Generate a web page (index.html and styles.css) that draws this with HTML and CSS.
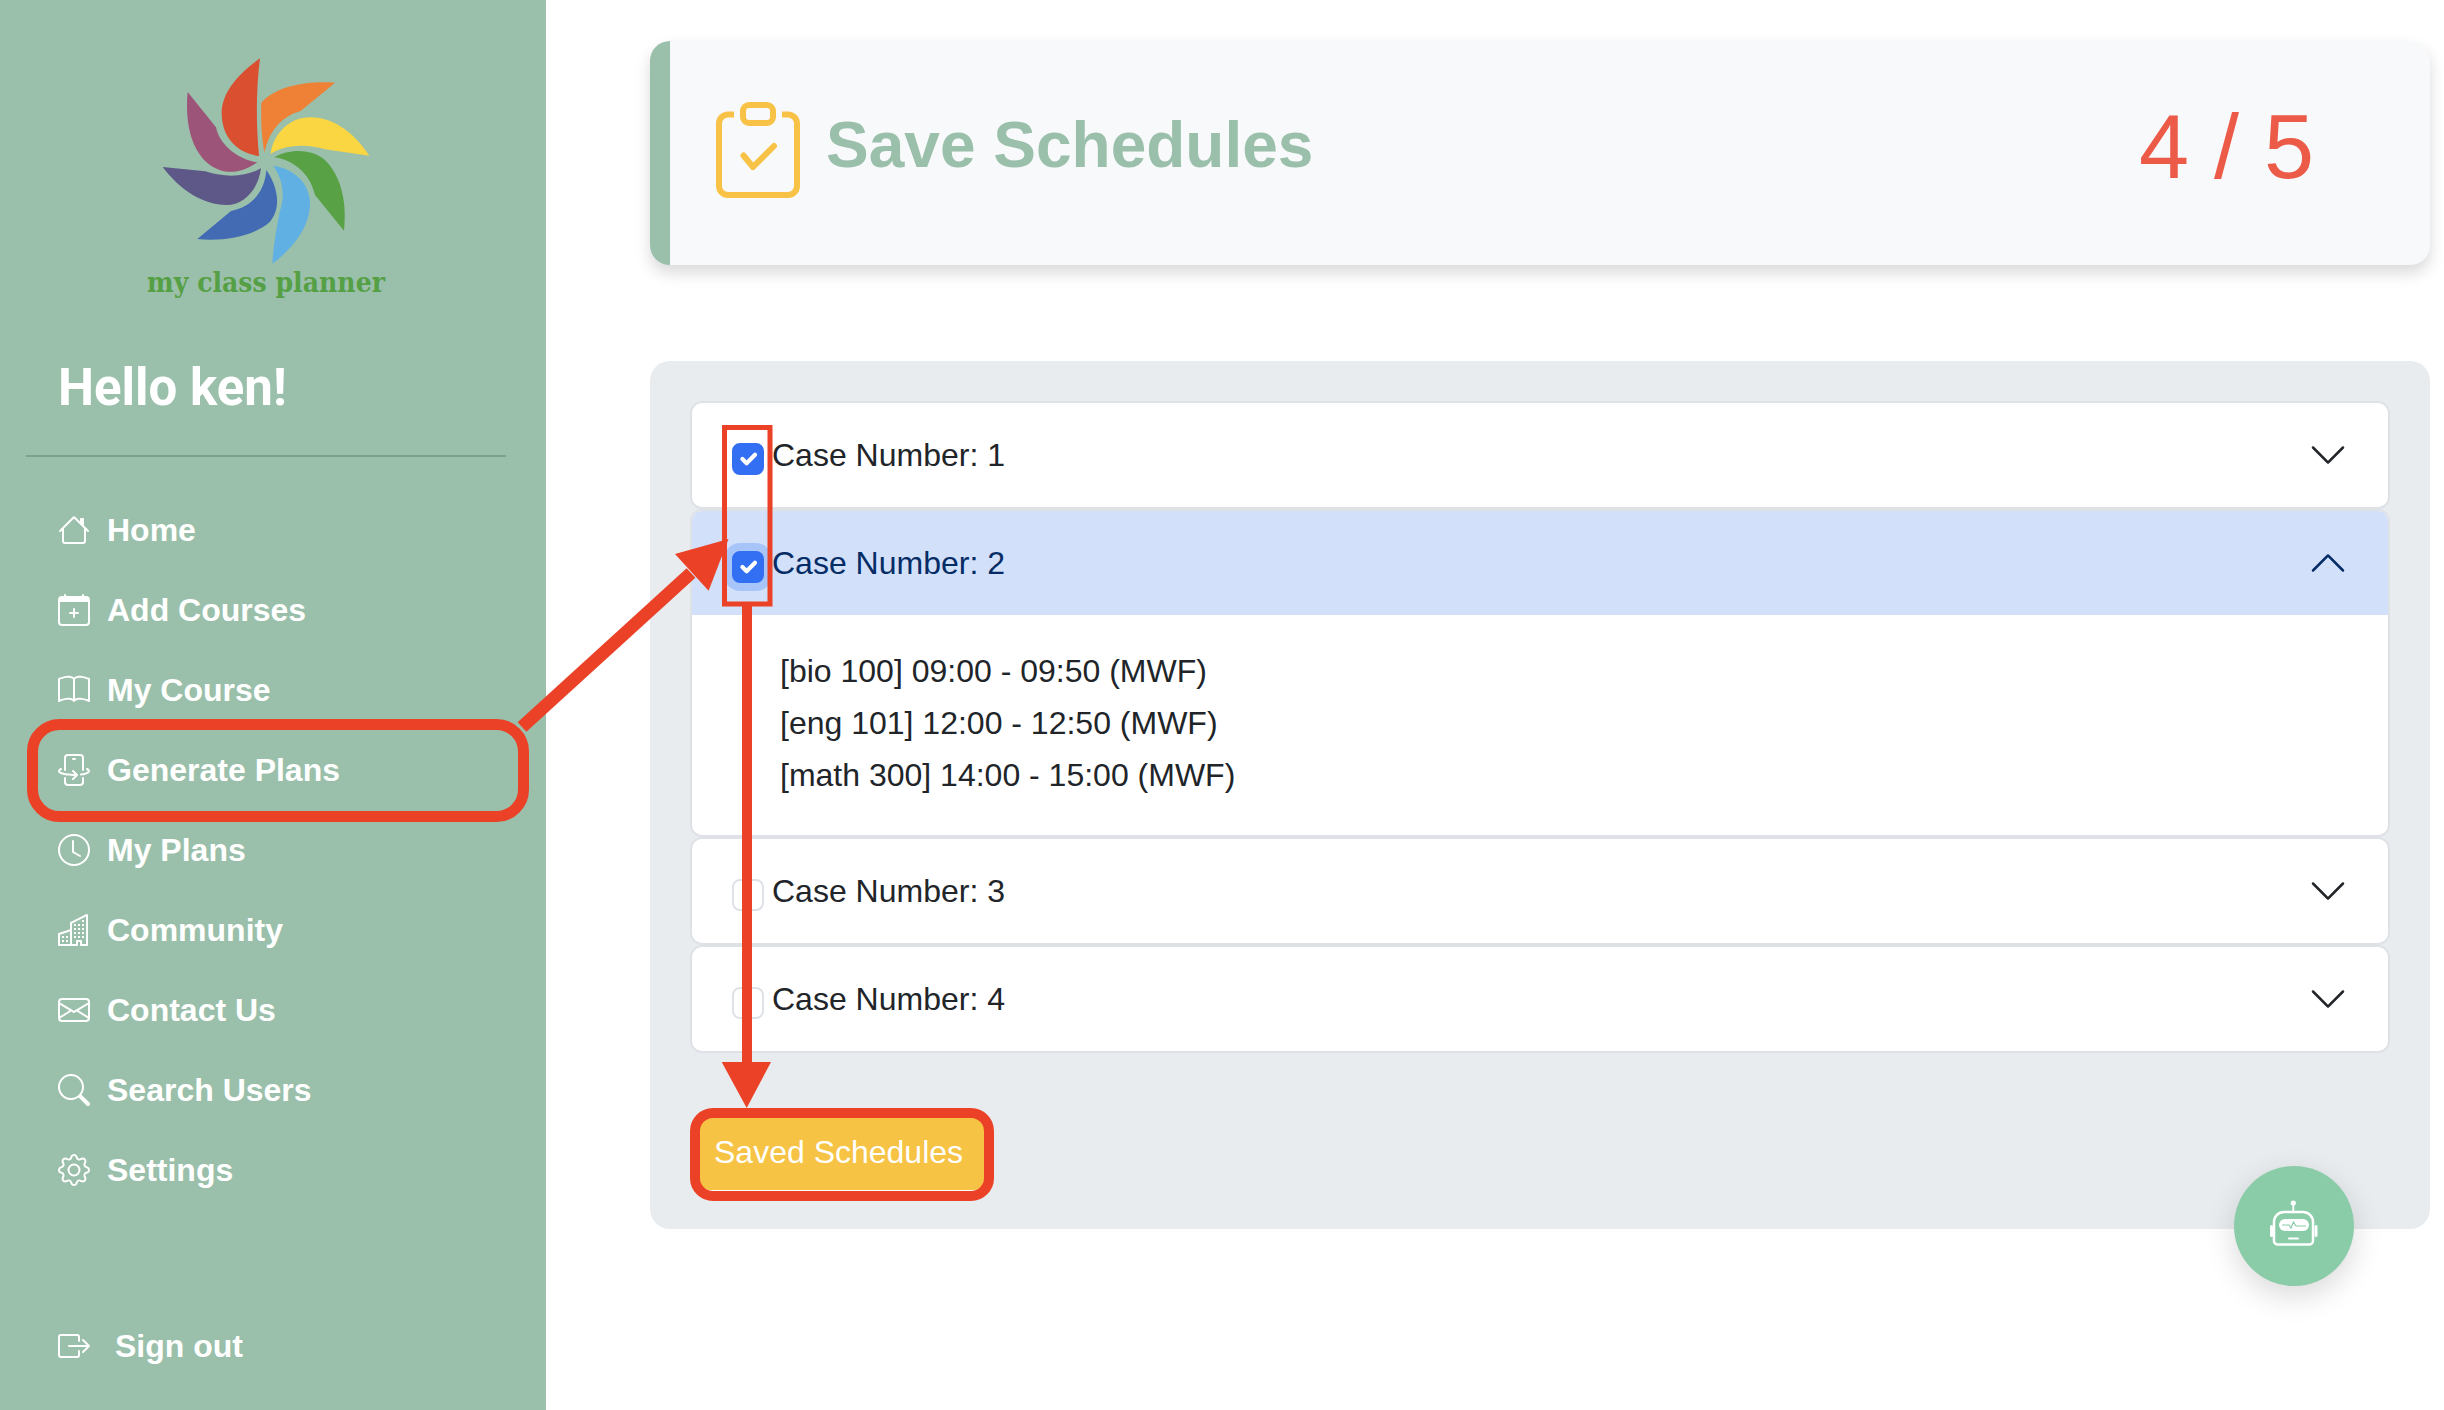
FILE: index.html
```html
<!DOCTYPE html>
<html lang="en">
<head>
  <meta charset="UTF-8" />
  <title>Save Schedules - My Class Planner</title>
  <link rel="stylesheet" href="styles.css">
</head>
<body>
  <div class="page">
    <aside class="sidebar">
      <svg class="logo" viewBox="0 0 840 672" xmlns="http://www.w3.org/2000/svg">
        <path fill="#d94f30" d="M390 55C320 105 275 160 275 220C275 290 320 340 387 348C378 250 378 150 390 55Z"/>
        <path fill="#ef8136" d="M615 128C540 122 440 135 394 188C392 240 395 300 404 338C415 280 450 230 512 213Z"/>
        <path fill="#fbd643" d="M718 347C680 290 620 232 540 232C480 232 430 280 422 342C460 315 530 310 585 328Z"/>
        <path fill="#58a145" d="M642 572C650 500 640 420 590 365C550 325 480 325 433 352C490 360 540 400 555 465Z"/>
        <path fill="#60b0e4" d="M427 671C490 625 540 560 540 490C540 430 490 385 430 378C460 420 465 470 450 512C440 560 430 620 427 671Z"/>
        <path fill="#426bb3" d="M202 597C280 605 370 590 420 545C450 510 450 450 409 390C405 450 370 500 303 513Z"/>
        <path fill="#5e5888" d="M98 381C150 450 220 495 290 495C340 495 385 450 393 385C350 410 290 415 226 394Z"/>
        <path fill="#9d5479" d="M173 156C165 240 180 330 240 375C290 410 340 395 382 367C330 360 270 320 258 262Z"/>
      </svg>
      <div class="wordmark">my class planner</div>
      <h2 class="hello">Hello ken!</h2>
      <hr class="divider">

      <nav class="nav">
        <a class="nav-item" href="#">
          <svg class="nav-icon" viewBox="0 0 16 16" fill="currentColor"><path d="M2 13.5V7h1v6.5a.5.5 0 0 0 .5.5h9a.5.5 0 0 0 .5-.5V7h1v6.5a1.5 1.5 0 0 1-1.5 1.5h-9A1.5 1.5 0 0 1 2 13.5zm11-11V6l-2-2V2.5a.5.5 0 0 1 .5-.5h1a.5.5 0 0 1 .5.5z"/><path d="M7.293 1.5a1 1 0 0 1 1.414 0l6.647 6.646a.5.5 0 0 1-.708.708L8 2.207 1.354 8.854a.5.5 0 1 1-.708-.708L7.293 1.5z"/></svg>
          Home
        </a>
        <a class="nav-item" href="#">
          <svg class="nav-icon" viewBox="0 0 16 16" fill="currentColor"><path d="M8 7a.5.5 0 0 1 .5.5V9H10a.5.5 0 0 1 0 1H8.5v1.5a.5.5 0 0 1-1 0V10H6a.5.5 0 0 1 0-1h1.5V7.5A.5.5 0 0 1 8 7z"/><path d="M3.5 0a.5.5 0 0 1 .5.5V1h8V.5a.5.5 0 0 1 1 0V1h1a2 2 0 0 1 2 2v11a2 2 0 0 1-2 2H2a2 2 0 0 1-2-2V3a2 2 0 0 1 2-2h1V.5a.5.5 0 0 1 .5-.5zM1 4v10a1 1 0 0 0 1 1h12a1 1 0 0 0 1-1V4H1z"/></svg>
          Add Courses
        </a>
        <a class="nav-item" href="#">
          <svg class="nav-icon" viewBox="0 0 16 16" fill="currentColor"><path d="M1 2.828c.885-.37 2.154-.769 3.388-.893 1.33-.134 2.458.063 3.112.752v9.746c-.935-.53-2.12-.603-3.213-.493-1.18.12-2.37.461-3.287.811V2.828zm7.5-.141c.654-.689 1.782-.886 3.112-.752 1.234.124 2.503.523 3.388.893v9.923c-.918-.35-2.107-.692-3.287-.81-1.094-.111-2.278-.039-3.213.492V2.687zM8 1.783C7.015.936 5.587.81 4.287.94c-1.514.153-3.042.672-3.994 1.105A.5.5 0 0 0 0 2.5v11a.5.5 0 0 0 .707.455c.882-.4 2.303-.881 3.68-1.02 1.409-.142 2.59.087 3.223.877a.5.5 0 0 0 .78 0c.633-.79 1.814-1.019 3.222-.877 1.378.139 2.8.62 3.681 1.02A.5.5 0 0 0 16 13.5v-11a.5.5 0 0 0-.293-.455c-.952-.433-2.48-.952-3.994-1.105C10.413.809 8.985.936 8 1.783z"/></svg>
          My Course
        </a>
        <a class="nav-item" href="#">
          <svg class="nav-icon" viewBox="0 0 16 16" fill="currentColor"><path d="M11 1H5a1 1 0 0 0-1 1v6a.5.5 0 0 1-1 0V2a2 2 0 0 1 2-2h6a2 2 0 0 1 2 2v6a.5.5 0 0 1-1 0V2a1 1 0 0 0-1-1Zm1 13a1 1 0 0 1-1 1H5a1 1 0 0 1-1-1v-2a.5.5 0 0 0-1 0v2a2 2 0 0 0 2 2h6a2 2 0 0 0 2-2v-2a.5.5 0 0 0-1 0v2ZM1.713 7.954a.5.5 0 1 0-.419-.908c-.347.16-.654.348-.882.57C.184 7.842 0 8.139 0 8.5c0 .546.408.94.823 1.201.44.278 1.043.51 1.745.696C3.978 10.773 5.898 11 8 11c.099 0 .197 0 .294-.002l-1.148 1.148a.5.5 0 0 0 .708.708l2-2a.5.5 0 0 0 0-.708l-2-2a.5.5 0 1 0-.708.708l1.145 1.144L8 10c-2.04 0-3.87-.221-5.174-.569-.656-.175-1.151-.374-1.47-.575C1.012 8.639 1 8.506 1 8.5c0-.003 0-.059.112-.17.115-.112.31-.242.6-.376Zm12.993-.908a.5.5 0 0 0-.419.908c.292.134.486.264.6.377.113.11.113.166.113.169 0 .003 0 .065-.13.187-.132.122-.352.26-.677.4-.645.28-1.596.523-2.763.687a.5.5 0 0 0 .14.99c1.212-.17 2.26-.43 3.02-.758.38-.164.713-.357.96-.587.246-.229.45-.537.45-.919 0-.362-.184-.66-.412-.883-.228-.223-.535-.411-.882-.571ZM7.5 2a.5.5 0 0 0 0 1h1a.5.5 0 0 0 0-1h-1Z"/></svg>
          Generate Plans
        </a>
        <a class="nav-item" href="#">
          <svg class="nav-icon" viewBox="0 0 16 16" fill="currentColor"><path d="M8 3.5a.5.5 0 0 0-1 0V9a.5.5 0 0 0 .252.434l3.5 2a.5.5 0 0 0 .496-.868L8 8.71V3.5z"/><path d="M8 16A8 8 0 1 0 8 0a8 8 0 0 0 0 16zm7-8A7 7 0 1 1 1 8a7 7 0 0 1 14 0z"/></svg>
          My Plans
        </a>
        <a class="nav-item" href="#">
          <svg class="nav-icon" viewBox="0 0 16 16" fill="currentColor"><path d="M14.763.075A.5.5 0 0 1 15 .5v15a.5.5 0 0 1-.5.5h-3a.5.5 0 0 1-.5-.5V14h-1v1.5a.5.5 0 0 1-.5.5h-9a.5.5 0 0 1-.5-.5V10a.5.5 0 0 1 .342-.474L6 7.64V4.5a.5.5 0 0 1 .276-.447l8-4a.5.5 0 0 1 .487.022ZM6 8.694 1 10.36V15h5V8.694ZM7 15h2v-1.5a.5.5 0 0 1 .5-.5h2a.5.5 0 0 1 .5.5V15h2V1.309l-7 3.5V15Z"/><path d="M2 11h1v1H2v-1Zm2 0h1v1H4v-1Zm-2 2h1v1H2v-1Zm2 0h1v1H4v-1Zm4-4h1v1H8V9Zm2 0h1v1h-1V9Zm-2 2h1v1H8v-1Zm2 0h1v1h-1v-1Zm2-2h1v1h-1V9Zm0 2h1v1h-1v-1ZM8 7h1v1H8V7Zm2 0h1v1h-1V7Zm2 0h1v1h-1V7ZM8 5h1v1H8V5Zm2 0h1v1h-1V5Zm2 0h1v1h-1V5Zm0-2h1v1h-1V3Z"/></svg>
          Community
        </a>
        <a class="nav-item" href="#">
          <svg class="nav-icon" viewBox="0 0 16 16" fill="currentColor"><path d="M0 4a2 2 0 0 1 2-2h12a2 2 0 0 1 2 2v8a2 2 0 0 1-2 2H2a2 2 0 0 1-2-2V4Zm2-1a1 1 0 0 0-1 1v.217l7 4.2 7-4.2V4a1 1 0 0 0-1-1H2Zm13 2.383-4.708 2.825L15 11.105V5.383Zm-.034 6.876-5.64-3.471L8 9.583l-1.326-.795-5.64 3.47A1 1 0 0 0 2 13h12a1 1 0 0 0 .966-.741ZM1 11.105l4.708-2.897L1 5.383v5.722Z"/></svg>
          Contact Us
        </a>
        <a class="nav-item" href="#">
          <svg class="nav-icon" viewBox="0 0 16 16" fill="currentColor"><path d="M11.742 10.344a6.5 6.5 0 1 0-1.397 1.398h-.001c.03.04.062.078.098.115l3.85 3.85a1 1 0 0 0 1.415-1.414l-3.85-3.85a1.007 1.007 0 0 0-.115-.1zM12 6.5a5.5 5.5 0 1 1-11 0 5.5 5.5 0 0 1 11 0z"/></svg>
          Search Users
        </a>
        <a class="nav-item" href="#">
          <svg class="nav-icon" viewBox="0 0 16 16" fill="currentColor"><path d="M8 4.754a3.246 3.246 0 1 0 0 6.492 3.246 3.246 0 0 0 0-6.492zM5.754 8a2.246 2.246 0 1 1 4.492 0 2.246 2.246 0 0 1-4.492 0z"/><path d="M9.796 1.343c-.527-1.79-3.065-1.79-3.592 0l-.094.319a.873.873 0 0 1-1.255.52l-.292-.16c-1.64-.892-3.433.902-2.54 2.541l.159.292a.873.873 0 0 1-.52 1.255l-.319.094c-1.79.527-1.79 3.065 0 3.592l.319.094a.873.873 0 0 1 .52 1.255l-.16.292c-.892 1.64.901 3.434 2.541 2.54l.292-.159a.873.873 0 0 1 1.255.52l.094.319c.527 1.79 3.065 1.79 3.592 0l.094-.319a.873.873 0 0 1 1.255-.52l.292.16c1.64.893 3.434-.902 2.54-2.541l-.159-.292a.873.873 0 0 1 .52-1.255l.319-.094c1.79-.527 1.79-3.065 0-3.592l-.319-.094a.873.873 0 0 1-.52-1.255l.16-.292c.893-1.64-.902-3.433-2.541-2.54l-.292.159a.873.873 0 0 1-1.255-.52l-.094-.319zm-2.633.283c.246-.835 1.428-.835 1.674 0l.094.319a1.873 1.873 0 0 0 2.693 1.115l.291-.16c.764-.415 1.6.42 1.184 1.185l-.159.292a1.873 1.873 0 0 0 1.116 2.692l.318.094c.835.246.835 1.428 0 1.674l-.319.094a1.873 1.873 0 0 0-1.115 2.693l.16.291c.415.764-.42 1.6-1.185 1.184l-.291-.159a1.873 1.873 0 0 0-2.693 1.116l-.094.318c-.246.835-1.428.835-1.674 0l-.094-.319a1.873 1.873 0 0 0-2.692-1.115l-.292.16c-.764.415-1.6-.42-1.184-1.185l.159-.291A1.873 1.873 0 0 0 1.945 8.93l-.319-.094c-.835-.246-.835-1.428 0-1.674l.319-.094A1.873 1.873 0 0 0 3.06 4.377l-.16-.292c-.415-.764.42-1.6 1.185-1.184l.292.159a1.873 1.873 0 0 0 2.692-1.115l.094-.319z"/></svg>
          Settings
        </a>
      </nav>

      <a class="nav-item sign-out" href="#">
        <svg class="nav-icon" viewBox="0 0 16 16" fill="currentColor"><path d="M10 12.5a.5.5 0 0 1-.5.5h-8a.5.5 0 0 1-.5-.5v-9a.5.5 0 0 1 .5-.5h8a.5.5 0 0 1 .5.5v2a.5.5 0 0 0 1 0v-2A1.5 1.5 0 0 0 9.5 2h-8A1.5 1.5 0 0 0 0 3.5v9A1.5 1.5 0 0 0 1.5 14h8a1.5 1.5 0 0 0 1.5-1.5v-2a.5.5 0 0 0-1 0v2z"/><path d="M15.854 8.354a.5.5 0 0 0 0-.708l-3-3a.5.5 0 0 0-.708.708L14.293 7.5H5.5a.5.5 0 0 0 0 1h8.793l-2.147 2.146a.5.5 0 0 0 .708.708l3-3z"/></svg>
        Sign out
      </a>
    </aside>

    <main class="main">
      <section class="title-card">
        <svg class="title-icon" viewBox="0 0 84 96" fill="none" stroke="#f7c245" stroke-width="6">
          <path d="M18 12.5H12a9 9 0 0 0-9 9V84a9 9 0 0 0 9 9H72a9 9 0 0 0 9-9V21.5a9 9 0 0 0-9-9H66"/>
          <rect x="27" y="3" width="30" height="18" rx="6"/>
          <path d="M27.5 53.500L37 65L58 44" stroke-width="6" stroke-linecap="round" stroke-linejoin="round"/>
        </svg>
        <h1 class="title">Save Schedules</h1>
        <div class="count">4 / 5</div>
      </section>

      <section class="panel">
        <div class="case">
          <div class="case-header">
            <span class="check checked"><svg viewBox="0 0 20 20" fill="none" stroke="#fff" stroke-width="3" stroke-linecap="round" stroke-linejoin="round"><path d="m6 10 3 3 6-6"/></svg></span>
            <span class="case-name">Case Number: 1</span>
            <svg class="chevron" viewBox="0 0 16 16" fill="currentColor"><path fill-rule="evenodd" d="M1.646 4.646a.5.5 0 0 1 .708 0L8 10.293l5.646-5.647a.5.5 0 0 1 .708.708l-6 6a.5.5 0 0 1-.708 0l-6-6a.5.5 0 0 1 0-.708z"/></svg>
          </div>
        </div>

        <div class="case">
          <div class="case-header open">
            <span class="check checked focus"><svg viewBox="0 0 20 20" fill="none" stroke="#fff" stroke-width="3" stroke-linecap="round" stroke-linejoin="round"><path d="m6 10 3 3 6-6"/></svg></span>
            <span class="case-name">Case Number: 2</span>
            <svg class="chevron flip" viewBox="0 0 16 16" fill="currentColor"><path fill-rule="evenodd" d="M1.646 4.646a.5.5 0 0 1 .708 0L8 10.293l5.646-5.647a.5.5 0 0 1 .708.708l-6 6a.5.5 0 0 1-.708 0l-6-6a.5.5 0 0 1 0-.708z"/></svg>
          </div>
          <div class="case-body">
            <p>[bio 100] 09:00 - 09:50 (MWF)</p>
            <p>[eng 101] 12:00 - 12:50 (MWF)</p>
            <p>[math 300] 14:00 - 15:00 (MWF)</p>
          </div>
        </div>

        <div class="case">
          <div class="case-header">
            <span class="check"></span>
            <span class="case-name">Case Number: 3</span>
            <svg class="chevron" viewBox="0 0 16 16" fill="currentColor"><path fill-rule="evenodd" d="M1.646 4.646a.5.5 0 0 1 .708 0L8 10.293l5.646-5.647a.5.5 0 0 1 .708.708l-6 6a.5.5 0 0 1-.708 0l-6-6a.5.5 0 0 1 0-.708z"/></svg>
          </div>
        </div>

        <div class="case">
          <div class="case-header">
            <span class="check"></span>
            <span class="case-name">Case Number: 4</span>
            <svg class="chevron" viewBox="0 0 16 16" fill="currentColor"><path fill-rule="evenodd" d="M1.646 4.646a.5.5 0 0 1 .708 0L8 10.293l5.646-5.647a.5.5 0 0 1 .708.708l-6 6a.5.5 0 0 1-.708 0l-6-6a.5.5 0 0 1 0-.708z"/></svg>
          </div>
        </div>

        <button class="save-btn" type="button">Saved Schedules</button>
      </section>
    </main>

    <button class="bot-btn" type="button" aria-label="Chat bot">
      <svg viewBox="-1 1 70 60" width="70" height="60">
        <circle cx="33.300" cy="8" r="2.600" fill="#fff"/>
        <path d="M33.300 9v8" stroke="#fff" stroke-width="1.800"/>
        <path d="M14 27a10 10 0 0 1 10-10H43a10 10 0 0 1 10 10V46a3.500 3.500 0 0 1-3.500 3.500H17.500A3.500 3.500 0 0 1 14 46Z" fill="none" stroke="#fff" stroke-width="2.500"/>
        <rect x="10" y="30" width="3" height="12" rx="1.500" fill="#fff"/>
        <rect x="54.500" y="30" width="3" height="12" rx="1.500" fill="#fff"/>
        <rect x="19" y="24" width="30" height="12" rx="6" fill="#fff"/>
        <path d="M22 30H29L31 33L33.500 27L36 31H46" fill="none" stroke="#8acca8" stroke-width="1.200"/>
        <rect x="28" y="42.500" width="11" height="2" rx="1" fill="#fff"/>
      </svg>
    </button>

    <!-- red annotations drawn over the page -->
    <svg class="annotations" viewBox="0 0 2444 1410" fill="none" stroke="#eb4126">
      <rect x="32.500" y="724.500" width="491" height="92" rx="27" stroke-width="11"/>
      <path d="M522 727L691 573" stroke-width="13"/>
      <path d="M728.500 539L675 554L708.600 590.700Z" fill="#eb4126" stroke="none"/>
      <rect x="724.500" y="427.500" width="45.500" height="176.500" stroke-width="5"/>
      <path d="M747 604V1064" stroke-width="10"/>
      <path d="M721.700 1062H771L746.700 1108Z" fill="#eb4126" stroke="none"/>
      <rect x="695" y="1113" width="294" height="83" rx="18" stroke-width="10"/>
    </svg>
  </div>
</body>
</html>
```

FILE: styles.css
```css
* {
  box-sizing: border-box;
}

body {
  margin: 0;
  font-family: "Liberation Sans", Arial, sans-serif;
  color: #212529;
  background: #fff;
}

.page {
  position: relative;
  display: flex;
  width: 2444px;
  height: 1410px;
  overflow: hidden;
}

/* sidebar */
.sidebar {
  display: flex;
  flex-direction: column;
  flex: 0 0 546px;
  background-color: #9abfaa;
  color: #fff;
}

.logo {
  display: block;
  width: 280px;
  height: 224px;
  margin: 40px 0 0 130px;
}

.wordmark {
  width: 532px;
  height: 30px;
  margin-top: 4px;
  font-family: "DejaVu Serif Condensed", "DejaVu Serif", serif;
  font-size: 28px;
  font-weight: bold;
  line-height: 30px;
  text-align: center;
  color: #55a044;
}

.hello {
  margin: 62px 0 0 58px;
  font-family: Roboto, sans-serif;
  font-size: 51px;
  font-weight: 700;
  line-height: 56px;
}

.divider {
  width: 480px;
  height: 2px;
  margin: 39px 0 33px 26px;
  border: none;
  background-color: #7ea08c;
}

.nav {
  display: flex;
  flex-direction: column;
}

.nav-item {
  display: flex;
  align-items: center;
  gap: 17px;
  height: 80px;
  padding-left: 58px;
  font-size: 32px;
  font-weight: bold;
  color: #fff;
  text-decoration: none;
}

.nav-icon {
  flex: 0 0 32px;
  width: 32px;
  height: 32px;
}

.sign-out {
  gap: 25px;
  margin-top: auto;
  margin-bottom: 24px;
}

/* main */
.main {
  flex: 1;
  padding: 41px 14px 0 104px;
}

.title-card {
  display: flex;
  align-items: center;
  height: 224px;
  padding: 0 116px 0 46px;
  background-color: #f8f9fa;
  border-left: 20px solid #9abfaa;
  border-radius: 20px;
  box-shadow: 0 8px 16px rgba(0, 0, 0, 0.15);
}

.title-icon {
  width: 84px;
  height: 96px;
  margin-bottom: 6px;
}

.title {
  margin: 0 0 16px 26px;
  font-size: 64px;
  font-weight: bold;
  color: #9abfaa;
}

.count {
  margin: 0 0 12px auto;
  font-size: 90px;
  color: #ec5a48;
}

.panel {
  height: 868px;
  margin-top: 96px;
  padding: 40px;
  background-color: #e9ecef;
  border-radius: 20px;
}

.case {
  overflow: hidden;
  background-color: #fff;
  border: 2px solid #dee2e6;
  border-radius: 12px;
}

.case-header {
  display: flex;
  align-items: center;
  height: 104px;
  padding: 0 40px;
  font-size: 32px;
}

.case-header.open {
  background-color: #d2e0fa;
  color: #052c65;
}

.check {
  flex: 0 0 32px;
  width: 32px;
  height: 32px;
  margin: 8px 8px 0 0;
  background-color: #fff;
  border: 2px solid #dee2e6;
  border-radius: 8px;
}

.check.checked {
  background-color: #336ff3;
  border-color: #336ff3;
}

.check.focus {
  box-shadow: 0 0 0 8px #a8c5fa;
}

.check svg {
  display: block;
  width: 100%;
  height: 100%;
}

.chevron {
  width: 40px;
  height: 40px;
  margin-left: auto;
}

.chevron.flip {
  transform: rotate(180deg);
}

.case-body {
  height: 220px;
  padding: 30px 40px 0 88px;
  font-size: 32px;
  line-height: 52px;
}

.case-body p {
  margin: 0;
}

.save-btn {
  width: 286px;
  height: 74px;
  margin: 64px 0 0 9px;
  padding: 0 21px 3px 14px;
  font-family: inherit;
  font-size: 32px;
  text-align: left;
  white-space: nowrap;
  color: #fff;
  background-color: #f6c344;
  border: 1px solid #fff;
  border-radius: 10px;
}

/* floating bot button */
.bot-btn {
  position: absolute;
  right: 90px;
  bottom: 124px;
  display: flex;
  align-items: center;
  justify-content: center;
  width: 120px;
  height: 120px;
  padding: 0;
  background-color: #8acca8;
  border: none;
  border-radius: 50%;
  box-shadow: 0 10px 30px rgba(0, 0, 0, 0.15);
}

.annotations {
  position: absolute;
  top: 0;
  left: 0;
  width: 2444px;
  height: 1410px;
  pointer-events: none;
}
```
